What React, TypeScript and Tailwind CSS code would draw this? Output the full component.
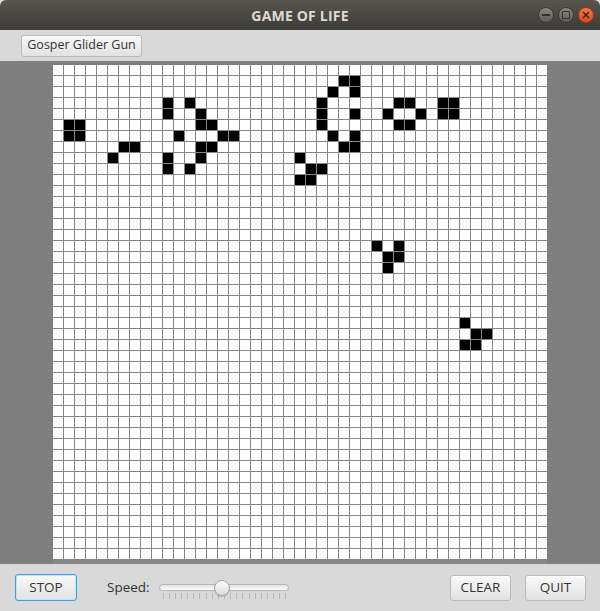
import React from "react";

const ROWS = 45;
const COLS = 45;

// live cells, row -> columns
const LIVE: Record<number, number[]> = {
  1: [26, 27],
  2: [25, 27],
  3: [10, 12, 24, 31, 32, 35, 36],
  4: [10, 13, 24, 27, 30, 33, 35, 36],
  5: [1, 2, 13, 14, 24, 31, 32],
  6: [1, 2, 11, 15, 16, 25, 27],
  7: [6, 7, 13, 14, 26, 27],
  8: [5, 10, 13, 22],
  9: [10, 12, 23, 24],
  10: [22, 23],
  16: [29, 31],
  17: [30, 31],
  18: [30],
  23: [37],
  24: [38, 39],
  25: [37, 38],
};

const font = { fontFamily: '"Open Sans", "DejaVu Sans", sans-serif' };

function FxButton({ label, focused, className }: { label: string; focused?: boolean; className?: string }) {
  return (
    <button
      className={
        "flex items-center justify-center rounded-[3px] bg-gradient-to-b from-[#f9f9f9] to-[#e2e2e2] text-[#333] " +
        (focused
          ? "border border-[#2fa4e7] shadow-[inset_0_0_0_1px_#bfe3f7] "
          : "border border-[#b8b8b8] shadow-[inset_0_1px_0_#ffffff] ") +
        (className ?? "")
      }
      style={font}
    >
      {label}
    </button>
  );
}

function Board() {
  const cells = [];
  for (let r = 0; r < ROWS; r++) {
    const live = LIVE[r] ?? [];
    for (let c = 0; c < COLS; c++) {
      cells.push(
        <div key={r * COLS + c} className={live.includes(c) ? "bg-black" : "bg-white"} />
      );
    }
  }
  return (
    <div className="grid grid-cols-[repeat(45,10px)] grid-rows-[repeat(45,10px)] gap-px bg-[#878787]">
      {cells}
    </div>
  );
}

function Slider() {
  const ticks = Array.from({ length: 21 });
  return (
    <div className="relative w-[130px] h-[20px]">
      <div className="absolute left-0 right-0 top-[4px] h-[7px] rounded-full border border-[#b5b5b5] bg-gradient-to-b from-[#e4e4e4] to-[#fafafa]" />
      <div className="absolute left-[4px] right-[2px] top-[13px] flex justify-between">
        {ticks.map((_, i) => (
          <div key={i} className="w-px h-[6px] bg-[#b9b9b9]" />
        ))}
      </div>
      <div className="absolute left-[55px] top-0 w-[16px] h-[16px] rounded-full border border-[#a2a2a2] bg-gradient-to-b from-[#fdfdfd] to-[#dcdcdc] shadow-[0_1px_1px_rgba(0,0,0,0.15)]" />
    </div>
  );
}

export default function App() {
  return (
    <div className="w-[600px] h-[611px] flex flex-col bg-[#d9d9d9] overflow-hidden">
      {/* title bar */}
      <div className="relative h-[30px] flex items-center justify-center bg-gradient-to-b from-[#58554f] to-[#3c3b37] rounded-t-[6px]">
        <span className="text-[14px] font-bold text-[#dfdbd2] tracking-[0.2px]" style={font}>
          GAME OF LIFE
        </span>
        <div className="absolute right-[6px] top-[7px] flex gap-[4px]">
          <div className="w-[16px] h-[16px] rounded-full bg-gradient-to-b from-[#8a8883] to-[#5d5c57] border border-[#3a3935] flex items-center justify-center">
            <div className="w-[8px] h-[2px] bg-[#35342f]" />
          </div>
          <div className="w-[16px] h-[16px] rounded-full bg-gradient-to-b from-[#8a8883] to-[#5d5c57] border border-[#3a3935] flex items-center justify-center">
            <div className="w-[8px] h-[8px] border-[1.5px] border-[#35342f]" />
          </div>
          <div className="w-[16px] h-[16px] rounded-full bg-gradient-to-b from-[#f3774a] to-[#df4c15] border border-[#a3391a] flex items-center justify-center">
            <svg width="8" height="8" viewBox="0 0 8 8">
              <path d="M1 1L7 7M7 1L1 7" stroke="#3c2a22" strokeWidth="1.6" />
            </svg>
          </div>
        </div>
      </div>

      {/* top toolbar */}
      <div className="h-[31px] flex items-center pl-[21px] bg-[#d9d9d9]">
        <FxButton label="Gosper Glider Gun" className="w-[121px] h-[22px] text-[12.5px]" />
      </div>

      {/* board */}
      <div className="h-[503px] bg-[#7f7f7f] flex justify-center pt-[4px]">
        <Board />
      </div>

      {/* bottom bar */}
      <div className="flex-1 flex items-center pl-[15px] pr-[14px]">
        <FxButton label="STOP" focused className="w-[62px] h-[27px] text-[13.5px]" />
        <span className="ml-[30px] mr-[9px] text-[13.5px] text-[#333]" style={font}>
          Speed:
        </span>
        <div className="mt-[4px]">
          <Slider />
        </div>
        <div className="flex-1" />
        <FxButton label="CLEAR" className="w-[61px] h-[26px] text-[13.5px]" />
        <FxButton label="QUIT" className="w-[61px] h-[26px] ml-[14px] text-[13.5px]" />
      </div>
    </div>
  );
}
